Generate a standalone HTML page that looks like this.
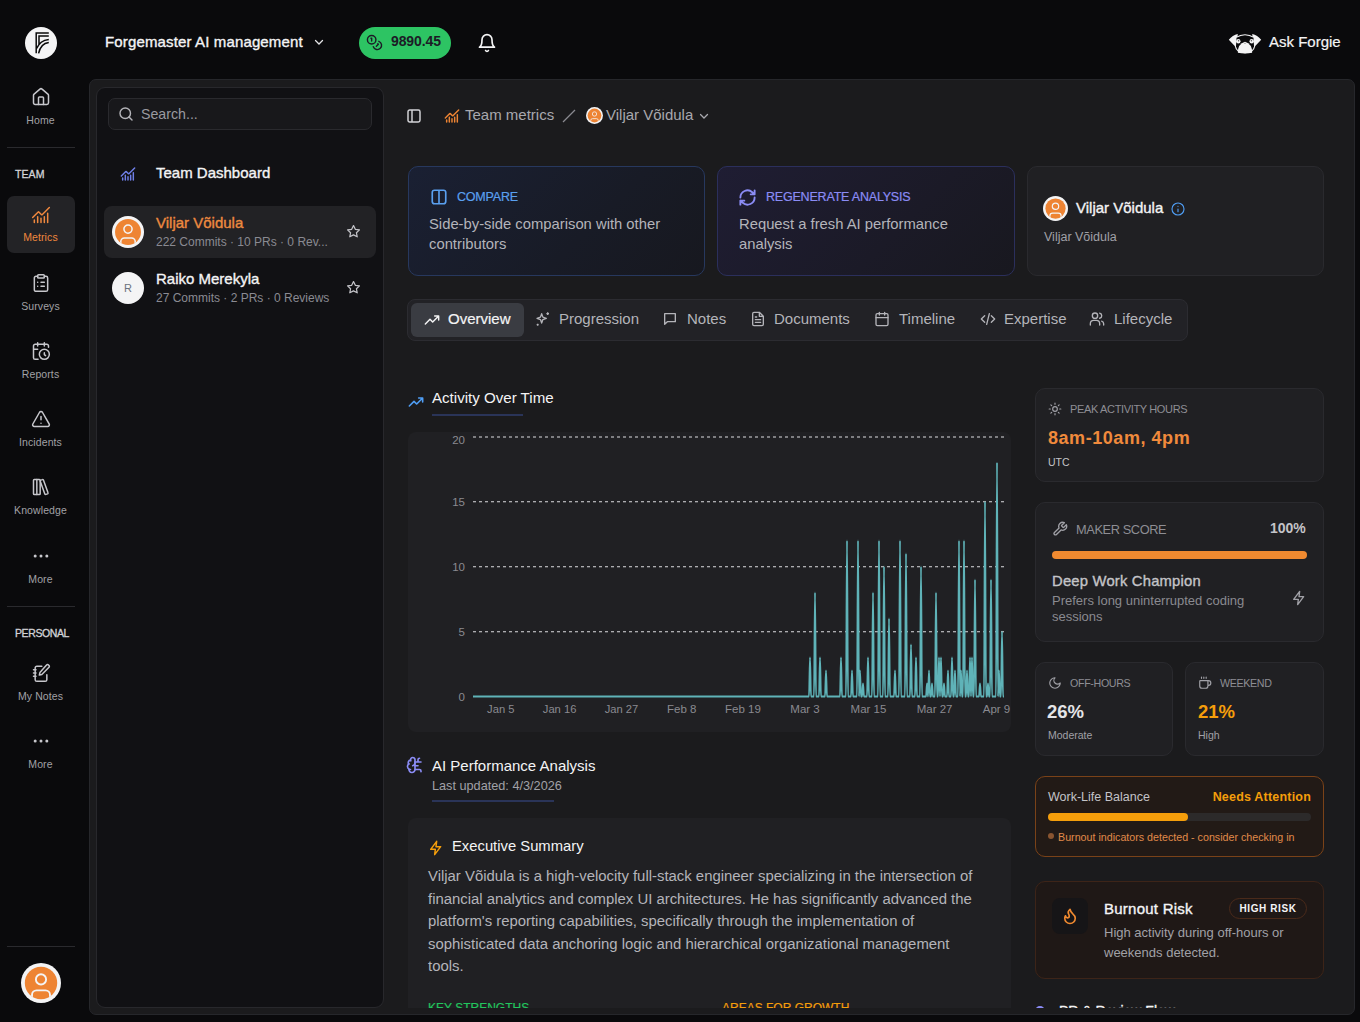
<!DOCTYPE html>
<html><head><meta charset="utf-8">
<style>
*{box-sizing:border-box;margin:0;padding:0}
html,body{width:1360px;height:1022px;overflow:hidden;background:#0a0a0c;font-family:"Liberation Sans",sans-serif;color:#e5e5e7}
.a{position:absolute}
svg{display:block}
.nl{position:absolute;left:0;width:81px;text-align:center;font-size:10.5px;color:#a1a1a6;letter-spacing:0.1px}
.ni{position:absolute;left:31px;width:20px;height:20px;stroke-width:1.8}
.sec{position:absolute;left:15px;font-size:10.5px;color:#d4d4d8;-webkit-text-stroke:0.3px #d4d4d8;letter-spacing:0.6px}
.div{position:absolute;left:7px;width:68px;height:1px;background:#2a2a2e}
#main{position:absolute;left:89px;top:79px;width:1266px;height:936px;background:#1b1b1d;border:1px solid #26272b;border-radius:7px;overflow:hidden}
#side{position:absolute;left:96px;top:87px;width:288px;height:921px;background:#111114;border:1px solid #28282c;border-radius:9px}
.card{position:absolute;border-radius:10px}
.sb{-webkit-text-stroke:0.35px currentColor}
.tab{position:absolute;top:303px;height:33px;font-size:14.5px;color:#b4b4b9;display:flex;align-items:center}
</style></head><body>

<!-- left nav -->
<svg class="a" style="left:25px;top:27px" width="32" height="32" viewBox="25 27 32 32"><circle cx="41" cy="43" r="16" fill="#f4f4f5"/>
<path d="M48.8 33.1H36.2V53.3M48.8 36H39V44.5M36.6 48.5C39 42.5 43 40 48.8 39.4M38.6 53.3C40 46.5 43.5 43 48.8 42.4" stroke="#0a0a0a" stroke-width="1.5" fill="none"/></svg>

<svg class="ni" style="top:87px" viewBox="0 0 24 24" fill="none" stroke="#c7c7cc" stroke-width="2" stroke-linecap="round" stroke-linejoin="round"><path d="M15 21v-8a1 1 0 0 0-1-1h-4a1 1 0 0 0-1 1v8"/><path d="M3 10a2 2 0 0 1 .709-1.528l7-5.999a2 2 0 0 1 2.582 0l7 5.999A2 2 0 0 1 21 10v9a2 2 0 0 1-2 2H5a2 2 0 0 1-2-2z"/></svg>
<div class="nl" style="top:114px">Home</div>
<div class="div" style="top:147px"></div>
<div class="sec" style="top:168px;letter-spacing:0.1px">TEAM</div>

<div class="a" style="left:7px;top:196px;width:68px;height:57px;background:#232326;border-radius:7px"></div>
<svg class="ni" style="top:205px" viewBox="0 0 24 24" fill="none" stroke="#f0883e" stroke-width="2" stroke-linecap="round" stroke-linejoin="round"><path d="M12 16v5M16 14v7M20 10v11M22 3l-8.646 8.646a.5.5 0 0 1-.708 0L9.354 8.354a.5.5 0 0 0-.707 0L2 15M4 18v3M8 14v7"/></svg>
<div class="nl" style="top:231px;color:#f0883e">Metrics</div>

<svg class="ni" style="top:273px" viewBox="0 0 24 24" fill="none" stroke="#c7c7cc" stroke-width="2" stroke-linecap="round" stroke-linejoin="round"><rect x="8" y="2" width="8" height="4" rx="1"/><path d="M16 4h2a2 2 0 0 1 2 2v14a2 2 0 0 1-2 2H6a2 2 0 0 1-2-2V6a2 2 0 0 1 2-2h2M12 11h4M12 16h4M8 11h.01M8 16h.01"/></svg>
<div class="nl" style="top:300px">Surveys</div>

<svg class="ni" style="top:341px" viewBox="0 0 24 24" fill="none" stroke="#c7c7cc" stroke-width="2" stroke-linecap="round" stroke-linejoin="round"><path d="M21 7.5V6a2 2 0 0 0-2-2H5a2 2 0 0 0-2 2v14a2 2 0 0 0 2 2h3.5M16 2v4M8 2v4M3 10h5M17.5 17.5 16 16.3V14"/><circle cx="16" cy="16" r="6"/></svg>
<div class="nl" style="top:368px">Reports</div>

<svg class="ni" style="top:409px" viewBox="0 0 24 24" fill="none" stroke="#c7c7cc" stroke-width="2" stroke-linecap="round" stroke-linejoin="round"><path d="M10.3 3.9 2.2 18a2 2 0 0 0 1.7 3h16.2a2 2 0 0 0 1.7-3L13.7 3.9a2 2 0 0 0-3.4 0zM12 9v4M12 17h.01"/></svg>
<div class="nl" style="top:436px">Incidents</div>

<svg class="ni" style="top:477px" viewBox="0 0 24 24" fill="none" stroke="#c7c7cc" stroke-width="2" stroke-linecap="round" stroke-linejoin="round"><rect width="8" height="18" x="3" y="3" rx="1"/><path d="M7 3v18M20.4 18.9c.2.5-.1 1.1-.6 1.3l-1.9.7c-.5.2-1.1-.1-1.3-.6L11.1 5.1c-.2-.5.1-1.1.6-1.3l1.9-.7c.5-.2 1.1.1 1.3.6Z"/></svg>
<div class="nl" style="top:504px">Knowledge</div>

<svg class="ni" style="top:546px" viewBox="0 0 24 24" fill="#c7c7cc"><circle cx="5" cy="12" r="1.8"/><circle cx="12" cy="12" r="1.8"/><circle cx="19" cy="12" r="1.8"/></svg>
<div class="nl" style="top:573px">More</div>
<div class="div" style="top:606px"></div>
<div class="sec" style="top:627px;letter-spacing:-0.4px">PERSONAL</div>

<svg class="ni" style="top:663px" viewBox="0 0 24 24" fill="none" stroke="#c7c7cc" stroke-width="2" stroke-linecap="round" stroke-linejoin="round"><path d="M13 4H7a2 2 0 0 0-2 2v14a2 2 0 0 0 2 2h10a2 2 0 0 0 2-2v-6M3 8h3M3 12h3M3 16h3M18.4 2.6a2 2 0 0 1 2.9 2.9L13 13.8 10 14.5l.7-3z"/></svg>
<div class="nl" style="top:690px">My Notes</div>

<svg class="ni" style="top:731px" viewBox="0 0 24 24" fill="#c7c7cc"><circle cx="5" cy="12" r="1.8"/><circle cx="12" cy="12" r="1.8"/><circle cx="19" cy="12" r="1.8"/></svg>
<div class="nl" style="top:758px">More</div>
<div class="div" style="top:946px"></div>

<svg class="a" style="left:21px;top:963px" width="40" height="40" viewBox="0 0 40 40"><defs><clipPath id="c21"><circle cx="20" cy="20" r="16.2"/></clipPath></defs><circle cx="20" cy="20" r="20" fill="#f4f4f5"/><circle cx="20" cy="20" r="16.2" fill="#ee8433"/><circle cx="20" cy="16.4" r="5.1" fill="none" stroke="#f4f4f5" stroke-width="1.9"/><rect x="11" y="27.4" width="18" height="14" rx="4.5" fill="none" stroke="#f4f4f5" stroke-width="1.9" clip-path="url(#c21)"/></svg>

<!-- top bar -->
<div class="a sb" style="left:105px;top:33px;font-size:15px;color:#f4f4f5;letter-spacing:0.14px">Forgemaster AI management</div>
<svg class="a" style="left:313px;top:36px" width="12" height="12" viewBox="0 0 24 24" fill="none" stroke="#e4e4e7" stroke-width="2.5" stroke-linecap="round"><path d="M5 9l7 7 7-7"/></svg>

<div class="a" style="left:359px;top:27px;width:92px;height:32px;border-radius:16px;background:#2dc463"></div>
<svg class="a" style="left:366px;top:34px" width="17" height="17" viewBox="0 0 24 24" fill="none" stroke="#1c1b26" stroke-width="2" stroke-linecap="round" stroke-linejoin="round"><circle cx="8" cy="8" r="6"/><path d="M18.09 10.37A6 6 0 1 1 10.34 18M7 6h1v4M16.71 13.88l.7.71-2.82 2.82"/></svg>
<div class="a" style="left:391px;top:33px;font-size:14px;font-weight:bold;color:#1c1b26;letter-spacing:-0.1px">9890.45</div>

<svg class="a" style="left:477px;top:32px" width="20" height="22" viewBox="0 0 24 24" fill="none" stroke="#f4f4f5" stroke-width="2" stroke-linecap="round" stroke-linejoin="round"><path d="M6 8a6 6 0 0 1 12 0c0 7 3 9 3 9H3s3-2 3-9M10.3 21a1.9 1.9 0 0 0 3.4 0"/></svg>

<svg class="a" style="left:1228px;top:32px" width="34" height="22" viewBox="1228 32 34 22">
<path d="M1228.8 39.8Q1232.5 34.8 1237.8 33.9L1236.2 47.6Z M1261.2 39.8Q1257.5 34.8 1252.2 33.9L1253.8 47.6Z" fill="#f4f4f5"/>
<path d="M1235.4 37.2Q1245 31.4 1254.6 37.2L1255.1 46.5Q1254 53.3 1245 53.3Q1236 53.3 1234.9 46.5Z" fill="#f4f4f5"/>
<path d="M1236.5 37.8Q1245 32.7 1253.5 37.8L1254 46.3Q1253 52.2 1245 52.2Q1237 52.2 1236 46.3Z" fill="#0a0a0c"/>
<path d="M1237.9 52.8Q1237.6 44 1245 41.8Q1252.4 44 1252.1 52.8Q1245 54 1237.9 52.8Z" fill="#f4f4f5"/>
<circle cx="1238.3" cy="41.2" r="2.2" fill="#f4f4f5"/><circle cx="1251.7" cy="41.2" r="2.2" fill="#f4f4f5"/>
<circle cx="1238.6" cy="40.8" r="0.7" fill="#555"/><circle cx="1251.4" cy="40.8" r="0.7" fill="#555"/>
<circle cx="1245" cy="43.3" r="0.6" fill="#777"/>
</svg>
<div class="a" style="left:1269px;top:33px;font-size:15px;color:#f4f4f5;-webkit-text-stroke:0.2px #f4f4f5">Ask Forgie</div>

<!-- main panel -->
<div id="main"></div>
<div id="side"></div>
<!-- side panel content -->
<div class="a" style="left:108px;top:98px;width:264px;height:32px;border-radius:7px;background:#18181b;border:1px solid #2a2a2e"></div>
<svg class="a" style="left:117px;top:104.5px" width="18" height="18" viewBox="0 0 24 24" fill="none" stroke="#b4b4b9" stroke-width="1.9" stroke-linecap="round"><circle cx="11" cy="11" r="7"/><path d="M20 20l-4-4"/></svg>
<div class="a" style="left:141px;top:106px;font-size:14.2px;color:#9a9aa0">Search...</div>

<svg class="a" style="left:120px;top:166px" width="16" height="16" viewBox="0 0 24 24" fill="none" stroke="#6f7fe8" stroke-width="2.2" stroke-linecap="round" stroke-linejoin="round"><path d="M12 16v5M16 14v7M20 10v11M22 3l-8.646 8.646a.5.5 0 0 1-.708 0L9.354 8.354a.5.5 0 0 0-.707 0L2 15M4 18v3M8 14v7"/></svg>
<div class="a sb" style="left:156px;top:164px;font-size:15px;color:#f4f4f5">Team Dashboard</div>

<div class="a" style="left:104px;top:206px;width:272px;height:52px;border-radius:8px;background:#222225"></div>
<svg class="a" style="left:112px;top:216px" width="32" height="32" viewBox="0 0 40 40"><defs><clipPath id="c112"><circle cx="20" cy="20" r="16.2"/></clipPath></defs><circle cx="20" cy="20" r="20" fill="#f4f4f5"/><circle cx="20" cy="20" r="16.2" fill="#ee8433"/><circle cx="20" cy="16.4" r="5.1" fill="none" stroke="#f4f4f5" stroke-width="1.9"/><rect x="11" y="27.4" width="18" height="14" rx="4.5" fill="none" stroke="#f4f4f5" stroke-width="1.9" clip-path="url(#c112)"/></svg>
<div class="a sb" style="left:156px;top:214px;font-size:15px;color:#ee8a40">Viljar Võidula</div>
<div class="a" style="left:156px;top:235px;font-size:12px;color:#8a8a92">222 Commits · 10 PRs · 0 Rev...</div>
<svg class="a" style="left:346px;top:224px" width="15" height="15" viewBox="0 0 24 24" fill="none" stroke="#c4c4c9" stroke-width="2" stroke-linejoin="round"><path d="M12 2.5l2.9 6 6.6.9-4.8 4.6 1.2 6.5L12 17.4l-5.9 3.1 1.2-6.5L2.5 9.4l6.6-.9z"/></svg>

<div class="a" style="left:112px;top:272px;width:32px;height:32px;border-radius:50%;background:#f4f4f5;font-size:11px;color:#6b7280;text-align:center;line-height:32px">R</div>
<div class="a sb" style="left:156px;top:270px;font-size:15px;color:#f4f4f5">Raiko Merekyla</div>
<div class="a" style="left:156px;top:291px;font-size:12px;color:#8a8a92">27 Commits · 2 PRs · 0 Reviews</div>
<svg class="a" style="left:346px;top:280px" width="15" height="15" viewBox="0 0 24 24" fill="none" stroke="#c4c4c9" stroke-width="2" stroke-linejoin="round"><path d="M12 2.5l2.9 6 6.6.9-4.8 4.6 1.2 6.5L12 17.4l-5.9 3.1 1.2-6.5L2.5 9.4l6.6-.9z"/></svg>


<!-- breadcrumb -->
<svg class="a" style="left:406px;top:108px" width="16" height="16" viewBox="0 0 24 24" fill="none" stroke="#d4d4d8" stroke-width="2.2" stroke-linejoin="round"><rect x="3" y="3" width="18" height="18" rx="2.5"/><path d="M9 3v18"/></svg>
<svg class="a" style="left:444px;top:108px" width="16" height="16" viewBox="0 0 24 24" fill="none" stroke="#ee8433" stroke-width="2.2" stroke-linecap="round" stroke-linejoin="round"><path d="M12 16v5M16 14v7M20 10v11M22 3l-8.646 8.646a.5.5 0 0 1-.708 0L9.354 8.354a.5.5 0 0 0-.707 0L2 15M4 18v3M8 14v7"/></svg>
<div class="a" style="left:465px;top:106px;font-size:15px;color:#a8a8ae">Team metrics</div>
<svg class="a" style="left:561px;top:108px" width="16" height="16" viewBox="0 0 16 16"><path d="M2 14L14 2" stroke="#8a8a90" stroke-width="1.3"/></svg>
<svg class="a" style="left:586px;top:107px" width="17" height="17" viewBox="0 0 40 40"><defs><clipPath id="c586"><circle cx="20" cy="20" r="16.2"/></clipPath></defs><circle cx="20" cy="20" r="20" fill="#f4f4f5"/><circle cx="20" cy="20" r="16.2" fill="#ee8433"/><circle cx="20" cy="16.4" r="5.1" fill="none" stroke="#f4f4f5" stroke-width="1.9"/><rect x="11" y="27.4" width="18" height="14" rx="4.5" fill="none" stroke="#f4f4f5" stroke-width="1.9" clip-path="url(#c586)"/></svg>
<div class="a" style="left:606px;top:106px;font-size:15px;color:#a8a8ae">Viljar Võidula</div>
<svg class="a" style="left:698px;top:110px" width="12" height="12" viewBox="0 0 24 24" fill="none" stroke="#a8a8ae" stroke-width="2.5" stroke-linecap="round"><path d="M5 9l7 7 7-7"/></svg>

<!-- action cards -->
<div class="card" style="left:408px;top:166px;width:297px;height:110px;background:linear-gradient(135deg,#1a2033 0%,#181b26 60%,#17181f 100%);border:1px solid #27385e"></div>
<svg class="a" style="left:430px;top:188px" width="18" height="18" viewBox="0 0 24 24" fill="none" stroke="#5aa0f0" stroke-width="2.2"><rect x="3" y="3" width="18" height="18" rx="3"/><path d="M12 3v18"/></svg>
<div class="a" style="left:457px;top:190px;font-size:12.5px;color:#5aa0f0;letter-spacing:-0.2px;-webkit-text-stroke:0.2px #5aa0f0">COMPARE</div>
<div class="a" style="left:429px;top:215px;width:270px;font-size:14.8px;line-height:19.5px;color:#b4b4ba">Side-by-side comparison with other contributors</div>

<div class="card" style="left:717px;top:166px;width:298px;height:110px;background:linear-gradient(135deg,#1f1d33 0%,#1b1a27 60%,#18181f 100%);border:1px solid #2b2f5c"></div>
<svg class="a" style="left:738px;top:188px" width="19" height="19" viewBox="0 0 24 24" fill="none" stroke="#8b8cf5" stroke-width="2.4" stroke-linecap="round" stroke-linejoin="round"><path d="M3 12a9 9 0 0 1 15-6.7L21 8M21 3v5h-5M21 12a9 9 0 0 1-15 6.7L3 16M3 21v-5h5"/></svg>
<div class="a" style="left:766px;top:190px;font-size:12.5px;color:#8b8cf5;letter-spacing:-0.2px;-webkit-text-stroke:0.2px #8b8cf5">REGENERATE ANALYSIS</div>
<div class="a" style="left:739px;top:215px;width:270px;font-size:14.8px;line-height:19.5px;color:#b4b4ba">Request a fresh AI performance<br>analysis</div>

<div class="card" style="left:1027px;top:166px;width:297px;height:110px;background:#202023;border:1px solid #2a2a2e"></div>
<svg class="a" style="left:1043px;top:196px" width="25" height="25" viewBox="0 0 40 40"><defs><clipPath id="c1043"><circle cx="20" cy="20" r="16.2"/></clipPath></defs><circle cx="20" cy="20" r="20" fill="#f4f4f5"/><circle cx="20" cy="20" r="16.2" fill="#ee8433"/><circle cx="20" cy="16.4" r="5.1" fill="none" stroke="#f4f4f5" stroke-width="1.9"/><rect x="11" y="27.4" width="18" height="14" rx="4.5" fill="none" stroke="#f4f4f5" stroke-width="1.9" clip-path="url(#c1043)"/></svg>
<div class="a sb" style="left:1076px;top:199px;font-size:15px;color:#f4f4f5">Viljar Võidula</div>
<svg class="a" style="left:1170px;top:201px" width="16" height="16" viewBox="0 0 24 24" fill="none" stroke="#4f9ef5" stroke-width="1.7" stroke-linecap="round"><circle cx="12" cy="12" r="9"/><path d="M12 16v-4M12 8h.01"/></svg>
<div class="a" style="left:1044px;top:230px;font-size:12.5px;color:#a1a1a7">Viljar Võidula</div>

<!-- tabs -->
<div class="a" style="left:407px;top:299px;width:781px;height:42px;border-radius:8px;background:#222226;border:1px solid #2c2c31"></div>
<div class="a" style="left:411px;top:303px;width:113px;height:34px;border-radius:6px;background:#3a3c42"></div>
<svg class="a" style="left:424px;top:312px" width="16" height="16" viewBox="0 0 24 24" fill="none" stroke="#f4f4f5" stroke-width="2.2" stroke-linecap="round" stroke-linejoin="round"><path d="M2 18l7-7 4 4 9-9M16 6h6v6"/></svg>
<div class="a" style="left:448px;top:310px;font-size:15px;color:#f4f4f5;-webkit-text-stroke:0.2px #f4f4f5">Overview</div>
<svg class="a" style="left:535px;top:311px" width="16" height="16" viewBox="0 0 24 24" fill="none" stroke="#b4b4b9" stroke-width="2" stroke-linejoin="round"><path d="M10 4l1.8 5.2L17 11l-5.2 1.8L10 18l-1.8-5.2L3 11l5.2-1.8zM19 2v4M21 4h-4M4 19v3M5.5 20.5h-3"/></svg>
<div class="a" style="left:559px;top:310px;font-size:15px;color:#b4b4b9">Progression</div>
<svg class="a" style="left:662px;top:311px" width="16" height="16" viewBox="0 0 24 24" fill="none" stroke="#b4b4b9" stroke-width="2" stroke-linejoin="round"><path d="M4 4h16v12H8l-4 4z"/></svg>
<div class="a" style="left:687px;top:310px;font-size:15px;color:#b4b4b9">Notes</div>
<svg class="a" style="left:750px;top:311px" width="16" height="16" viewBox="0 0 24 24" fill="none" stroke="#b4b4b9" stroke-width="2" stroke-linejoin="round" stroke-linecap="round"><path d="M14 2H6a2 2 0 0 0-2 2v16a2 2 0 0 0 2 2h12a2 2 0 0 0 2-2V8zM14 2v6h6M8 13h8M8 17h8M8 9h2"/></svg>
<div class="a" style="left:774px;top:310px;font-size:15px;color:#b4b4b9">Documents</div>
<svg class="a" style="left:874px;top:311px" width="16" height="16" viewBox="0 0 24 24" fill="none" stroke="#b4b4b9" stroke-width="2" stroke-linejoin="round" stroke-linecap="round"><rect x="3" y="4" width="18" height="18" rx="2"/><path d="M3 10h18M8 2v4M16 2v4"/></svg>
<div class="a" style="left:899px;top:310px;font-size:15px;color:#b4b4b9">Timeline</div>
<svg class="a" style="left:980px;top:311px" width="16" height="16" viewBox="0 0 24 24" fill="none" stroke="#b4b4b9" stroke-width="2" stroke-linejoin="round" stroke-linecap="round"><path d="M7 7l-5 5 5 5M17 7l5 5-5 5M14 4l-4 16"/></svg>
<div class="a" style="left:1004px;top:310px;font-size:15px;color:#b4b4b9">Expertise</div>
<svg class="a" style="left:1089px;top:311px" width="16" height="16" viewBox="0 0 24 24" fill="none" stroke="#b4b4b9" stroke-width="2" stroke-linejoin="round" stroke-linecap="round"><circle cx="9" cy="7" r="4"/><path d="M2 21v-2a5 5 0 0 1 5-5h4a5 5 0 0 1 5 5v2M16 3.1a4 4 0 0 1 0 7.8M22 21v-2a4 4 0 0 0-3-3.9"/></svg>
<div class="a" style="left:1114px;top:310px;font-size:15px;color:#b4b4b9">Lifecycle</div>

<!-- activity -->
<svg class="a" style="left:408px;top:396px" width="16" height="12" viewBox="0 0 24 18" fill="none" stroke="#4f9ef5" stroke-width="2.4" stroke-linecap="round" stroke-linejoin="round"><path d="M2 15l7-7 4 4 9-9M16 3h6v6"/></svg>
<div class="a" style="left:432px;top:388.5px;font-size:15.1px;color:#f4f4f5">Activity Over Time</div>
<div class="a" style="left:432px;top:414px;width:91px;height:2px;background:#2a3458"></div>
<div class="a" style="left:408px;top:432px;width:603px;height:300px;border-radius:8px;background:#202023"></div>
<svg class="a" style="left:0;top:0;font-family:'Liberation Sans',sans-serif" width="1360" height="1022">
<path d="M473 437H1004" stroke="#dcdce0" stroke-width="1.1" stroke-dasharray="3 3"/><text x="465" y="444" text-anchor="end" font-size="11.5" fill="#8a8a90">20</text><path d="M473 501.8H1004" stroke="#dcdce0" stroke-width="1.1" stroke-dasharray="3 3"/><text x="465" y="505.8" text-anchor="end" font-size="11.5" fill="#8a8a90">15</text><path d="M473 566.8H1004" stroke="#dcdce0" stroke-width="1.1" stroke-dasharray="3 3"/><text x="465" y="570.8" text-anchor="end" font-size="11.5" fill="#8a8a90">10</text><path d="M473 631.8H1004" stroke="#dcdce0" stroke-width="1.1" stroke-dasharray="3 3"/><text x="465" y="635.8" text-anchor="end" font-size="11.5" fill="#8a8a90">5</text><text x="465" y="700.5" text-anchor="end" font-size="11.5" fill="#8a8a90">0</text><text x="500.8" y="713" text-anchor="middle" font-size="11.2" fill="#8a8a90">Jan 5</text><text x="559.6" y="713" text-anchor="middle" font-size="11.2" fill="#8a8a90">Jan 16</text><text x="621.5" y="713" text-anchor="middle" font-size="11.2" fill="#8a8a90">Jan 27</text><text x="681.7" y="713" text-anchor="middle" font-size="11.5" fill="#8a8a90">Feb 8</text><text x="743" y="713" text-anchor="middle" font-size="11.5" fill="#8a8a90">Feb 19</text><text x="805" y="713" text-anchor="middle" font-size="11.5" fill="#8a8a90">Mar 3</text><text x="868.5" y="713" text-anchor="middle" font-size="11.5" fill="#8a8a90">Mar 15</text><text x="934.6" y="713" text-anchor="middle" font-size="11.5" fill="#8a8a90">Mar 27</text><text x="996.5" y="713" text-anchor="middle" font-size="11.5" fill="#8a8a90">Apr 9</text>
<path d="M473.00 696.50C473.33 696.50 473.67 696.50 474.00 696.50C474.33 696.50 474.67 696.50 475.00 696.50C475.33 696.50 475.67 696.50 476.00 696.50C476.33 696.50 476.67 696.50 477.00 696.50C477.33 696.50 477.67 696.50 478.00 696.50C478.33 696.50 478.67 696.50 479.00 696.50C479.33 696.50 479.67 696.50 480.00 696.50C480.33 696.50 480.67 696.50 481.00 696.50C481.33 696.50 481.67 696.50 482.00 696.50C482.33 696.50 482.67 696.50 483.00 696.50C483.33 696.50 483.67 696.50 484.00 696.50C484.33 696.50 484.67 696.50 485.00 696.50C485.33 696.50 485.67 696.50 486.00 696.50C486.33 696.50 486.67 696.50 487.00 696.50C487.33 696.50 487.67 696.50 488.00 696.50C488.33 696.50 488.67 696.50 489.00 696.50C489.33 696.50 489.67 696.50 490.00 696.50C490.33 696.50 490.67 696.50 491.00 696.50C491.33 696.50 491.67 696.50 492.00 696.50C492.33 696.50 492.67 696.50 493.00 696.50C493.33 696.50 493.67 696.50 494.00 696.50C494.33 696.50 494.67 696.50 495.00 696.50C495.33 696.50 495.67 696.50 496.00 696.50C496.33 696.50 496.67 696.50 497.00 696.50C497.33 696.50 497.67 696.50 498.00 696.50C498.33 696.50 498.67 696.50 499.00 696.50C499.33 696.50 499.67 696.50 500.00 696.50C500.33 696.50 500.67 696.50 501.00 696.50C501.33 696.50 501.67 696.50 502.00 696.50C502.33 696.50 502.67 696.50 503.00 696.50C503.33 696.50 503.67 696.50 504.00 696.50C504.33 696.50 504.67 696.50 505.00 696.50C505.33 696.50 505.67 696.50 506.00 696.50C506.33 696.50 506.67 696.50 507.00 696.50C507.33 696.50 507.67 696.50 508.00 696.50C508.33 696.50 508.67 696.50 509.00 696.50C509.33 696.50 509.67 696.50 510.00 696.50C510.33 696.50 510.67 696.50 511.00 696.50C511.33 696.50 511.67 696.50 512.00 696.50C512.33 696.50 512.67 696.50 513.00 696.50C513.33 696.50 513.67 696.50 514.00 696.50C514.33 696.50 514.67 696.50 515.00 696.50C515.33 696.50 515.67 696.50 516.00 696.50C516.33 696.50 516.67 696.50 517.00 696.50C517.33 696.50 517.67 696.50 518.00 696.50C518.33 696.50 518.67 696.50 519.00 696.50C519.33 696.50 519.67 696.50 520.00 696.50C520.33 696.50 520.67 696.50 521.00 696.50C521.33 696.50 521.67 696.50 522.00 696.50C522.33 696.50 522.67 696.50 523.00 696.50C523.33 696.50 523.67 696.50 524.00 696.50C524.33 696.50 524.67 696.50 525.00 696.50C525.33 696.50 525.67 696.50 526.00 696.50C526.33 696.50 526.67 696.50 527.00 696.50C527.33 696.50 527.67 696.50 528.00 696.50C528.33 696.50 528.67 696.50 529.00 696.50C529.33 696.50 529.67 696.50 530.00 696.50C530.33 696.50 530.67 696.50 531.00 696.50C531.33 696.50 531.67 696.50 532.00 696.50C532.33 696.50 532.67 696.50 533.00 696.50C533.33 696.50 533.67 696.50 534.00 696.50C534.33 696.50 534.67 696.50 535.00 696.50C535.33 696.50 535.67 696.50 536.00 696.50C536.33 696.50 536.67 696.50 537.00 696.50C537.33 696.50 537.67 696.50 538.00 696.50C538.33 696.50 538.67 696.50 539.00 696.50C539.33 696.50 539.67 696.50 540.00 696.50C540.33 696.50 540.67 696.50 541.00 696.50C541.33 696.50 541.67 696.50 542.00 696.50C542.33 696.50 542.67 696.50 543.00 696.50C543.33 696.50 543.67 696.50 544.00 696.50C544.33 696.50 544.67 696.50 545.00 696.50C545.33 696.50 545.67 696.50 546.00 696.50C546.33 696.50 546.67 696.50 547.00 696.50C547.33 696.50 547.67 696.50 548.00 696.50C548.33 696.50 548.67 696.50 549.00 696.50C549.33 696.50 549.67 696.50 550.00 696.50C550.33 696.50 550.67 696.50 551.00 696.50C551.33 696.50 551.67 696.50 552.00 696.50C552.33 696.50 552.67 696.50 553.00 696.50C553.33 696.50 553.67 696.50 554.00 696.50C554.33 696.50 554.67 696.50 555.00 696.50C555.33 696.50 555.67 696.50 556.00 696.50C556.33 696.50 556.67 696.50 557.00 696.50C557.33 696.50 557.67 696.50 558.00 696.50C558.33 696.50 558.67 696.50 559.00 696.50C559.33 696.50 559.67 696.50 560.00 696.50C560.33 696.50 560.67 696.50 561.00 696.50C561.33 696.50 561.67 696.50 562.00 696.50C562.33 696.50 562.67 696.50 563.00 696.50C563.33 696.50 563.67 696.50 564.00 696.50C564.33 696.50 564.67 696.50 565.00 696.50C565.33 696.50 565.67 696.50 566.00 696.50C566.33 696.50 566.67 696.50 567.00 696.50C567.33 696.50 567.67 696.50 568.00 696.50C568.33 696.50 568.67 696.50 569.00 696.50C569.33 696.50 569.67 696.50 570.00 696.50C570.33 696.50 570.67 696.50 571.00 696.50C571.33 696.50 571.67 696.50 572.00 696.50C572.33 696.50 572.67 696.50 573.00 696.50C573.33 696.50 573.67 696.50 574.00 696.50C574.33 696.50 574.67 696.50 575.00 696.50C575.33 696.50 575.67 696.50 576.00 696.50C576.33 696.50 576.67 696.50 577.00 696.50C577.33 696.50 577.67 696.50 578.00 696.50C578.33 696.50 578.67 696.50 579.00 696.50C579.33 696.50 579.67 696.50 580.00 696.50C580.33 696.50 580.67 696.50 581.00 696.50C581.33 696.50 581.67 696.50 582.00 696.50C582.33 696.50 582.67 696.50 583.00 696.50C583.33 696.50 583.67 696.50 584.00 696.50C584.33 696.50 584.67 696.50 585.00 696.50C585.33 696.50 585.67 696.50 586.00 696.50C586.33 696.50 586.67 696.50 587.00 696.50C587.33 696.50 587.67 696.50 588.00 696.50C588.33 696.50 588.67 696.50 589.00 696.50C589.33 696.50 589.67 696.50 590.00 696.50C590.33 696.50 590.67 696.50 591.00 696.50C591.33 696.50 591.67 696.50 592.00 696.50C592.33 696.50 592.67 696.50 593.00 696.50C593.33 696.50 593.67 696.50 594.00 696.50C594.33 696.50 594.67 696.50 595.00 696.50C595.33 696.50 595.67 696.50 596.00 696.50C596.33 696.50 596.67 696.50 597.00 696.50C597.33 696.50 597.67 696.50 598.00 696.50C598.33 696.50 598.67 696.50 599.00 696.50C599.33 696.50 599.67 696.50 600.00 696.50C600.33 696.50 600.67 696.50 601.00 696.50C601.33 696.50 601.67 696.50 602.00 696.50C602.33 696.50 602.67 696.50 603.00 696.50C603.33 696.50 603.67 696.50 604.00 696.50C604.33 696.50 604.67 696.50 605.00 696.50C605.33 696.50 605.67 696.50 606.00 696.50C606.33 696.50 606.67 696.50 607.00 696.50C607.33 696.50 607.67 696.50 608.00 696.50C608.33 696.50 608.67 696.50 609.00 696.50C609.33 696.50 609.67 696.50 610.00 696.50C610.33 696.50 610.67 696.50 611.00 696.50C611.33 696.50 611.67 696.50 612.00 696.50C612.33 696.50 612.67 696.50 613.00 696.50C613.33 696.50 613.67 696.50 614.00 696.50C614.33 696.50 614.67 696.50 615.00 696.50C615.33 696.50 615.67 696.50 616.00 696.50C616.33 696.50 616.67 696.50 617.00 696.50C617.33 696.50 617.67 696.50 618.00 696.50C618.33 696.50 618.67 696.50 619.00 696.50C619.33 696.50 619.67 696.50 620.00 696.50C620.33 696.50 620.67 696.50 621.00 696.50C621.33 696.50 621.67 696.50 622.00 696.50C622.33 696.50 622.67 696.50 623.00 696.50C623.33 696.50 623.67 696.50 624.00 696.50C624.33 696.50 624.67 696.50 625.00 696.50C625.33 696.50 625.67 696.50 626.00 696.50C626.33 696.50 626.67 696.50 627.00 696.50C627.33 696.50 627.67 696.50 628.00 696.50C628.33 696.50 628.67 696.50 629.00 696.50C629.33 696.50 629.67 696.50 630.00 696.50C630.33 696.50 630.67 696.50 631.00 696.50C631.33 696.50 631.67 696.50 632.00 696.50C632.33 696.50 632.67 696.50 633.00 696.50C633.33 696.50 633.67 696.50 634.00 696.50C634.33 696.50 634.67 696.50 635.00 696.50C635.33 696.50 635.67 696.50 636.00 696.50C636.33 696.50 636.67 696.50 637.00 696.50C637.33 696.50 637.67 696.50 638.00 696.50C638.33 696.50 638.67 696.50 639.00 696.50C639.33 696.50 639.67 696.50 640.00 696.50C640.33 696.50 640.67 696.50 641.00 696.50C641.33 696.50 641.67 696.50 642.00 696.50C642.33 696.50 642.67 696.50 643.00 696.50C643.33 696.50 643.67 696.50 644.00 696.50C644.33 696.50 644.67 696.50 645.00 696.50C645.33 696.50 645.67 696.50 646.00 696.50C646.33 696.50 646.67 696.50 647.00 696.50C647.33 696.50 647.67 696.50 648.00 696.50C648.33 696.50 648.67 696.50 649.00 696.50C649.33 696.50 649.67 696.50 650.00 696.50C650.33 696.50 650.67 696.50 651.00 696.50C651.33 696.50 651.67 696.50 652.00 696.50C652.33 696.50 652.67 696.50 653.00 696.50C653.33 696.50 653.67 696.50 654.00 696.50C654.33 696.50 654.67 696.50 655.00 696.50C655.33 696.50 655.67 696.50 656.00 696.50C656.33 696.50 656.67 696.50 657.00 696.50C657.33 696.50 657.67 696.50 658.00 696.50C658.33 696.50 658.67 696.50 659.00 696.50C659.33 696.50 659.67 696.50 660.00 696.50C660.33 696.50 660.67 696.50 661.00 696.50C661.33 696.50 661.67 696.50 662.00 696.50C662.33 696.50 662.67 696.50 663.00 696.50C663.33 696.50 663.67 696.50 664.00 696.50C664.33 696.50 664.67 696.50 665.00 696.50C665.33 696.50 665.67 696.50 666.00 696.50C666.33 696.50 666.67 696.50 667.00 696.50C667.33 696.50 667.67 696.50 668.00 696.50C668.33 696.50 668.67 696.50 669.00 696.50C669.33 696.50 669.67 696.50 670.00 696.50C670.33 696.50 670.67 696.50 671.00 696.50C671.33 696.50 671.67 696.50 672.00 696.50C672.33 696.50 672.67 696.50 673.00 696.50C673.33 696.50 673.67 696.50 674.00 696.50C674.33 696.50 674.67 696.50 675.00 696.50C675.33 696.50 675.67 696.50 676.00 696.50C676.33 696.50 676.67 696.50 677.00 696.50C677.33 696.50 677.67 696.50 678.00 696.50C678.33 696.50 678.67 696.50 679.00 696.50C679.33 696.50 679.67 696.50 680.00 696.50C680.33 696.50 680.67 696.50 681.00 696.50C681.33 696.50 681.67 696.50 682.00 696.50C682.33 696.50 682.67 696.50 683.00 696.50C683.33 696.50 683.67 696.50 684.00 696.50C684.33 696.50 684.67 696.50 685.00 696.50C685.33 696.50 685.67 696.50 686.00 696.50C686.33 696.50 686.67 696.50 687.00 696.50C687.33 696.50 687.67 696.50 688.00 696.50C688.33 696.50 688.67 696.50 689.00 696.50C689.33 696.50 689.67 696.50 690.00 696.50C690.33 696.50 690.67 696.50 691.00 696.50C691.33 696.50 691.67 696.50 692.00 696.50C692.33 696.50 692.67 696.50 693.00 696.50C693.33 696.50 693.67 696.50 694.00 696.50C694.33 696.50 694.67 696.50 695.00 696.50C695.33 696.50 695.67 696.50 696.00 696.50C696.33 696.50 696.67 696.50 697.00 696.50C697.33 696.50 697.67 696.50 698.00 696.50C698.33 696.50 698.67 696.50 699.00 696.50C699.33 696.50 699.67 696.50 700.00 696.50C700.33 696.50 700.67 696.50 701.00 696.50C701.33 696.50 701.67 696.50 702.00 696.50C702.33 696.50 702.67 696.50 703.00 696.50C703.33 696.50 703.67 696.50 704.00 696.50C704.33 696.50 704.67 696.50 705.00 696.50C705.33 696.50 705.67 696.50 706.00 696.50C706.33 696.50 706.67 696.50 707.00 696.50C707.33 696.50 707.67 696.50 708.00 696.50C708.33 696.50 708.67 696.50 709.00 696.50C709.33 696.50 709.67 696.50 710.00 696.50C710.33 696.50 710.67 696.50 711.00 696.50C711.33 696.50 711.67 696.50 712.00 696.50C712.33 696.50 712.67 696.50 713.00 696.50C713.33 696.50 713.67 696.50 714.00 696.50C714.33 696.50 714.67 696.50 715.00 696.50C715.33 696.50 715.67 696.50 716.00 696.50C716.33 696.50 716.67 696.50 717.00 696.50C717.33 696.50 717.67 696.50 718.00 696.50C718.33 696.50 718.67 696.50 719.00 696.50C719.33 696.50 719.67 696.50 720.00 696.50C720.33 696.50 720.67 696.50 721.00 696.50C721.33 696.50 721.67 696.50 722.00 696.50C722.33 696.50 722.67 696.50 723.00 696.50C723.33 696.50 723.67 696.50 724.00 696.50C724.33 696.50 724.67 696.50 725.00 696.50C725.33 696.50 725.67 696.50 726.00 696.50C726.33 696.50 726.67 696.50 727.00 696.50C727.33 696.50 727.67 696.50 728.00 696.50C728.33 696.50 728.67 696.50 729.00 696.50C729.33 696.50 729.67 696.50 730.00 696.50C730.33 696.50 730.67 696.50 731.00 696.50C731.33 696.50 731.67 696.50 732.00 696.50C732.33 696.50 732.67 696.50 733.00 696.50C733.33 696.50 733.67 696.50 734.00 696.50C734.33 696.50 734.67 696.50 735.00 696.50C735.33 696.50 735.67 696.50 736.00 696.50C736.33 696.50 736.67 696.50 737.00 696.50C737.33 696.50 737.67 696.50 738.00 696.50C738.33 696.50 738.67 696.50 739.00 696.50C739.33 696.50 739.67 696.50 740.00 696.50C740.33 696.50 740.67 696.50 741.00 696.50C741.33 696.50 741.67 696.50 742.00 696.50C742.33 696.50 742.67 696.50 743.00 696.50C743.33 696.50 743.67 696.50 744.00 696.50C744.33 696.50 744.67 696.50 745.00 696.50C745.33 696.50 745.67 696.50 746.00 696.50C746.33 696.50 746.67 696.50 747.00 696.50C747.33 696.50 747.67 696.50 748.00 696.50C748.33 696.50 748.67 696.50 749.00 696.50C749.33 696.50 749.67 696.50 750.00 696.50C750.33 696.50 750.67 696.50 751.00 696.50C751.33 696.50 751.67 696.50 752.00 696.50C752.33 696.50 752.67 696.50 753.00 696.50C753.33 696.50 753.67 696.50 754.00 696.50C754.33 696.50 754.67 696.50 755.00 696.50C755.33 696.50 755.67 696.50 756.00 696.50C756.33 696.50 756.67 696.50 757.00 696.50C757.33 696.50 757.67 696.50 758.00 696.50C758.33 696.50 758.67 696.50 759.00 696.50C759.33 696.50 759.67 696.50 760.00 696.50C760.33 696.50 760.67 696.50 761.00 696.50C761.33 696.50 761.67 696.50 762.00 696.50C762.33 696.50 762.67 696.50 763.00 696.50C763.33 696.50 763.67 696.50 764.00 696.50C764.33 696.50 764.67 696.50 765.00 696.50C765.33 696.50 765.67 696.50 766.00 696.50C766.33 696.50 766.67 696.50 767.00 696.50C767.33 696.50 767.67 696.50 768.00 696.50C768.33 696.50 768.67 696.50 769.00 696.50C769.33 696.50 769.67 696.50 770.00 696.50C770.33 696.50 770.67 696.50 771.00 696.50C771.33 696.50 771.67 696.50 772.00 696.50C772.33 696.50 772.67 696.50 773.00 696.50C773.33 696.50 773.67 696.50 774.00 696.50C774.33 696.50 774.67 696.50 775.00 696.50C775.33 696.50 775.67 696.50 776.00 696.50C776.33 696.50 776.67 696.50 777.00 696.50C777.33 696.50 777.67 696.50 778.00 696.50C778.33 696.50 778.67 696.50 779.00 696.50C779.33 696.50 779.67 696.50 780.00 696.50C780.33 696.50 780.67 696.50 781.00 696.50C781.33 696.50 781.67 696.50 782.00 696.50C782.33 696.50 782.67 696.50 783.00 696.50C783.33 696.50 783.67 696.50 784.00 696.50C784.33 696.50 784.67 696.50 785.00 696.50C785.33 696.50 785.67 696.50 786.00 696.50C786.33 696.50 786.67 696.50 787.00 696.50C787.33 696.50 787.67 696.50 788.00 696.50C788.33 696.50 788.67 696.50 789.00 696.50C789.33 696.50 789.67 696.50 790.00 696.50C790.33 696.50 790.67 696.50 791.00 696.50C791.33 696.50 791.67 696.50 792.00 696.50C792.33 696.50 792.67 696.50 793.00 696.50C793.33 696.50 793.67 696.50 794.00 696.50C794.33 696.50 794.67 696.50 795.00 696.50C795.33 696.50 795.67 696.50 796.00 696.50C796.33 696.50 796.67 696.50 797.00 696.50C797.33 696.50 797.67 696.50 798.00 696.50C798.33 696.50 798.67 696.50 799.00 696.50C799.33 696.50 799.67 696.50 800.00 696.50C800.33 696.50 800.67 696.50 801.00 696.50C801.33 696.50 801.67 696.50 802.00 696.50C802.33 696.50 802.67 696.50 803.00 696.50C803.33 696.50 803.67 696.50 804.00 696.50C804.33 696.50 804.67 696.50 805.00 696.50C805.33 696.50 805.67 696.50 806.00 696.50C806.33 696.50 806.67 696.50 807.00 696.50C807.33 696.50 807.67 696.50 808.00 696.50C808.33 696.50 808.67 696.50 809.00 696.50C809.33 696.50 809.67 657.50 810.00 657.50C810.33 657.50 810.67 696.50 811.00 696.50C811.33 696.50 811.67 696.50 812.00 696.50C812.33 696.50 812.67 696.50 813.00 696.50C813.33 696.50 813.67 696.50 814.00 696.50C814.33 696.50 814.67 592.50 815.00 592.50C815.33 592.50 815.67 696.50 816.00 696.50C816.33 696.50 816.67 696.50 817.00 696.50C817.33 696.50 817.67 696.50 818.00 696.50C818.33 696.50 818.67 696.50 819.00 696.50C819.33 696.50 819.67 657.50 820.00 657.50C820.33 657.50 820.67 696.50 821.00 696.50C821.33 696.50 821.67 696.50 822.00 696.50C822.33 696.50 822.67 696.50 823.00 696.50C823.33 696.50 823.67 696.50 824.00 696.50C824.33 696.50 824.67 696.50 825.00 696.50C825.33 696.50 825.67 670.50 826.00 670.50C826.33 670.50 826.67 696.50 827.00 696.50C827.33 696.50 827.67 696.50 828.00 696.50C828.33 696.50 828.67 696.50 829.00 696.50C829.33 696.50 829.67 696.50 830.00 696.50C830.33 696.50 830.67 696.50 831.00 696.50C831.33 696.50 831.67 696.50 832.00 696.50C832.33 696.50 832.67 696.50 833.00 696.50C833.33 696.50 833.67 696.50 834.00 696.50C834.33 696.50 834.67 696.50 835.00 696.50C835.33 696.50 835.67 696.50 836.00 696.50C836.33 696.50 836.67 696.50 837.00 696.50C837.33 696.50 837.67 696.50 838.00 696.50C838.33 696.50 838.67 696.50 839.00 696.50C839.33 696.50 839.67 696.50 840.00 696.50C840.33 696.50 840.67 657.50 841.00 657.50C841.33 657.50 841.67 696.50 842.00 696.50C842.33 696.50 842.67 696.50 843.00 696.50C843.33 696.50 843.67 696.50 844.00 696.50C844.33 696.50 844.67 696.50 845.00 696.50C845.33 696.50 845.67 696.50 846.00 696.50C846.33 696.50 846.67 540.50 847.00 540.50C847.33 540.50 847.67 696.50 848.00 696.50C848.33 696.50 848.67 696.50 849.00 696.50C849.33 696.50 849.67 696.50 850.00 696.50C850.33 696.50 850.67 696.50 851.00 696.50C851.33 696.50 851.67 670.50 852.00 670.50C852.33 670.50 852.67 696.50 853.00 696.50C853.33 696.50 853.67 696.50 854.00 696.50C854.33 696.50 854.67 696.50 855.00 696.50C855.33 696.50 855.67 696.50 856.00 696.50C856.33 696.50 856.67 696.50 857.00 696.50C857.33 696.50 857.67 540.50 858.00 540.50C858.33 540.50 858.67 696.50 859.00 696.50C859.33 696.50 859.67 670.50 860.00 670.50C860.33 670.50 860.67 696.50 861.00 696.50C861.33 696.50 861.67 696.50 862.00 696.50C862.33 696.50 862.67 683.50 863.00 683.50C863.33 683.50 863.67 696.50 864.00 696.50C864.33 696.50 864.67 696.50 865.00 696.50C865.33 696.50 865.67 696.50 866.00 696.50C866.33 696.50 866.67 696.50 867.00 696.50C867.33 696.50 867.67 657.50 868.00 657.50C868.33 657.50 868.67 696.50 869.00 696.50C869.33 696.50 869.67 696.50 870.00 696.50C870.33 696.50 870.67 696.50 871.00 696.50C871.33 696.50 871.67 696.50 872.00 696.50C872.33 696.50 872.67 592.50 873.00 592.50C873.33 592.50 873.67 696.50 874.00 696.50C874.33 696.50 874.67 696.50 875.00 696.50C875.33 696.50 875.67 696.50 876.00 696.50C876.33 696.50 876.67 696.50 877.00 696.50C877.33 696.50 877.67 696.50 878.00 696.50C878.33 696.50 878.67 540.50 879.00 540.50C879.33 540.50 879.67 696.50 880.00 696.50C880.33 696.50 880.67 696.50 881.00 696.50C881.33 696.50 881.67 696.50 882.00 696.50C882.33 696.50 882.67 696.50 883.00 696.50C883.33 696.50 883.67 566.50 884.00 566.50C884.33 566.50 884.67 696.50 885.00 696.50C885.33 696.50 885.67 696.50 886.00 696.50C886.33 696.50 886.67 696.50 887.00 696.50C887.33 696.50 887.67 696.50 888.00 696.50C888.33 696.50 888.67 618.50 889.00 618.50C889.33 618.50 889.67 696.50 890.00 696.50C890.33 696.50 890.67 696.50 891.00 696.50C891.33 696.50 891.67 696.50 892.00 696.50C892.33 696.50 892.67 696.50 893.00 696.50C893.33 696.50 893.67 696.50 894.00 696.50C894.33 696.50 894.67 670.50 895.00 670.50C895.33 670.50 895.67 696.50 896.00 696.50C896.33 696.50 896.67 696.50 897.00 696.50C897.33 696.50 897.67 696.50 898.00 696.50C898.33 696.50 898.67 696.50 899.00 696.50C899.33 696.50 899.67 540.50 900.00 540.50C900.33 540.50 900.67 696.50 901.00 696.50C901.33 696.50 901.67 696.50 902.00 696.50C902.33 696.50 902.67 696.50 903.00 696.50C903.33 696.50 903.67 696.50 904.00 696.50C904.33 696.50 904.67 696.50 905.00 696.50C905.33 696.50 905.67 553.50 906.00 553.50C906.33 553.50 906.67 696.50 907.00 696.50C907.33 696.50 907.67 696.50 908.00 696.50C908.33 696.50 908.67 696.50 909.00 696.50C909.33 696.50 909.67 696.50 910.00 696.50C910.33 696.50 910.67 644.50 911.00 644.50C911.33 644.50 911.67 696.50 912.00 696.50C912.33 696.50 912.67 696.50 913.00 696.50C913.33 696.50 913.67 696.50 914.00 696.50C914.33 696.50 914.67 696.50 915.00 696.50C915.33 696.50 915.67 657.50 916.00 657.50C916.33 657.50 916.67 696.50 917.00 696.50C917.33 696.50 917.67 696.50 918.00 696.50C918.33 696.50 918.67 696.50 919.00 696.50C919.33 696.50 919.67 696.50 920.00 696.50C920.33 696.50 920.67 566.50 921.00 566.50C921.33 566.50 921.67 696.50 922.00 696.50C922.33 696.50 922.67 696.50 923.00 696.50C923.33 696.50 923.67 696.50 924.00 696.50C924.33 696.50 924.67 696.50 925.00 696.50C925.33 696.50 925.67 696.50 926.00 696.50C926.33 696.50 926.67 683.50 927.00 683.50C927.33 683.50 927.67 696.50 928.00 696.50C928.33 696.50 928.67 670.50 929.00 670.50C929.33 670.50 929.67 696.50 930.00 696.50C930.33 696.50 930.67 696.50 931.00 696.50C931.33 696.50 931.67 683.50 932.00 683.50C932.33 683.50 932.67 696.50 933.00 696.50C933.33 696.50 933.67 696.50 934.00 696.50C934.33 696.50 934.67 696.50 935.00 696.50C935.33 696.50 935.67 592.50 936.00 592.50C936.33 592.50 936.67 696.50 937.00 696.50C937.33 696.50 937.67 696.50 938.00 696.50C938.33 696.50 938.67 657.50 939.00 657.50C939.33 657.50 939.67 696.50 940.00 696.50C940.33 696.50 940.67 657.50 941.00 657.50C941.33 657.50 941.67 696.50 942.00 696.50C942.33 696.50 942.67 696.50 943.00 696.50C943.33 696.50 943.67 683.50 944.00 683.50C944.33 683.50 944.67 696.50 945.00 696.50C945.33 696.50 945.67 696.50 946.00 696.50C946.33 696.50 946.67 696.50 947.00 696.50C947.33 696.50 947.67 670.50 948.00 670.50C948.33 670.50 948.67 696.50 949.00 696.50C949.33 696.50 949.67 696.50 950.00 696.50C950.33 696.50 950.67 696.50 951.00 696.50C951.33 696.50 951.67 657.50 952.00 657.50C952.33 657.50 952.67 696.50 953.00 696.50C953.33 696.50 953.67 696.50 954.00 696.50C954.33 696.50 954.67 670.50 955.00 670.50C955.33 670.50 955.67 696.50 956.00 696.50C956.33 696.50 956.67 696.50 957.00 696.50C957.33 696.50 957.67 696.50 958.00 696.50C958.33 696.50 958.67 540.50 959.00 540.50C959.33 540.50 959.67 696.50 960.00 696.50C960.33 696.50 960.67 670.50 961.00 670.50C961.33 670.50 961.67 696.50 962.00 696.50C962.33 696.50 962.67 696.50 963.00 696.50C963.33 696.50 963.67 540.50 964.00 540.50C964.33 540.50 964.67 696.50 965.00 696.50C965.33 696.50 965.67 696.50 966.00 696.50C966.33 696.50 966.67 670.50 967.00 670.50C967.33 670.50 967.67 696.50 968.00 696.50C968.33 696.50 968.67 696.50 969.00 696.50C969.33 696.50 969.67 657.50 970.00 657.50C970.33 657.50 970.67 696.50 971.00 696.50C971.33 696.50 971.67 657.50 972.00 657.50C972.33 657.50 972.67 696.50 973.00 696.50C973.33 696.50 973.67 696.50 974.00 696.50C974.33 696.50 974.67 579.50 975.00 579.50C975.33 579.50 975.67 696.50 976.00 696.50C976.33 696.50 976.67 696.50 977.00 696.50C977.33 696.50 977.67 696.50 978.00 696.50C978.33 696.50 978.67 696.50 979.00 696.50C979.33 696.50 979.67 683.50 980.00 683.50C980.33 683.50 980.67 696.50 981.00 696.50C981.33 696.50 981.67 696.50 982.00 696.50C982.33 696.50 982.67 696.50 983.00 696.50C983.33 696.50 983.67 696.50 984.00 696.50C984.33 696.50 984.67 501.50 985.00 501.50C985.33 501.50 985.67 696.50 986.00 696.50C986.33 696.50 986.67 696.50 987.00 696.50C987.33 696.50 987.67 683.50 988.00 683.50C988.33 683.50 988.67 696.50 989.00 696.50C989.33 696.50 989.67 696.50 990.00 696.50C990.33 696.50 990.67 579.50 991.00 579.50C991.33 579.50 991.67 696.50 992.00 696.50C992.33 696.50 992.67 696.50 993.00 696.50C993.33 696.50 993.67 696.50 994.00 696.50C994.33 696.50 994.67 696.50 995.00 696.50C995.33 696.50 995.67 696.50 996.00 696.50C996.33 696.50 996.67 462.50 997.00 462.50C997.33 462.50 997.67 696.50 998.00 696.50C998.33 696.50 998.67 670.50 999.00 670.50C999.33 670.50 999.67 696.50 1000.00 696.50C1000.33 696.50 1000.67 696.50 1001.00 696.50C1001.33 696.50 1001.67 631.50 1002.00 631.50C1002.33 631.50 1002.67 696.50 1003.00 696.50C1003.33 696.50 1003.67 696.50 1004.00 696.50" fill="none" stroke="#5fb3b8" stroke-width="1.8" stroke-linejoin="round"/>
</svg>

<!-- AI analysis -->
<svg class="a" style="left:406px;top:756px" width="18" height="18" viewBox="0 0 24 24" fill="none" stroke="#8b8cf5" stroke-width="2.2" stroke-linecap="round" stroke-linejoin="round"><path d="M12 5a3 3 0 1 0-5.997.125 4 4 0 0 0-2.526 5.77 4 4 0 0 0 .556 6.588A4 4 0 1 0 12 18Z"/><path d="M9 13a4.5 4.5 0 0 0 3-4M6.003 5.125A3 3 0 0 0 6.401 6.5M3.477 10.896a4 4 0 0 1 .585-.396M6 18a4 4 0 0 1-1.967-.516M12 13h4M12 18h6a2 2 0 0 1 2 2v1M12 8h8M16 8V5a2 2 0 0 1 2-2"/></svg>
<div class="a" style="left:432px;top:757px;font-size:15px;color:#f4f4f5">AI Performance Analysis</div>
<div class="a" style="left:432px;top:779px;font-size:12.7px;color:#a1a1a7">Last updated: 4/3/2026</div>
<div class="a" style="left:432px;top:800px;width:122px;height:2px;background:#2a3458"></div>

<div class="a" style="left:408px;top:818px;width:603px;height:190px;border-radius:8px 8px 0 0;background:#202023;overflow:hidden">
 <svg class="a" style="left:20px;top:22px" width="16" height="16" viewBox="0 0 24 24" fill="none" stroke="#f59e0b" stroke-width="2.2" stroke-linejoin="round"><path d="M13 2L4 14h7l-1 8 9-12h-7z"/></svg>
 <div class="a" style="left:44px;top:20px;font-size:14.8px;color:#f4f4f5">Executive Summary</div>
 <div class="a" style="left:20px;top:47px;width:590px;font-size:14.9px;line-height:22.6px;color:#b4b4ba">Viljar Võidula is a high-velocity full-stack engineer specializing in the intersection of<br>financial analytics and complex UI architectures. He has significantly advanced the<br>platform's reporting capabilities, specifically through the implementation of<br>sophisticated data anchoring logic and hierarchical organizational management<br>tools.</div>
 <div class="a" style="left:20px;top:182.5px;font-size:12px;color:#22c55e;letter-spacing:0px;-webkit-text-stroke:0.2px #22c55e">KEY STRENGTHS</div>
 <div class="a" style="left:314px;top:182.5px;font-size:12px;color:#f59e0b;letter-spacing:0px;-webkit-text-stroke:0.2px #f59e0b">AREAS FOR GROWTH</div>
</div>

<!-- right column -->
<div class="card" style="left:1035px;top:388px;width:289px;height:94px;background:#202023;border:1px solid #2a2a2e"></div>
<svg class="a" style="left:1048px;top:402px" width="14" height="14" viewBox="0 0 24 24" fill="none" stroke="#a1a1a7" stroke-width="2" stroke-linecap="round"><circle cx="12" cy="12" r="4"/><path d="M12 2v2M12 20v2M4.9 4.9l1.4 1.4M17.7 17.7l1.4 1.4M2 12h2M20 12h2M6.3 17.7l-1.4 1.4M19.1 4.9l-1.4 1.4"/></svg>
<div class="a" style="left:1070px;top:403px;font-size:11px;color:#8e8e94;letter-spacing:-0.35px">PEAK ACTIVITY HOURS</div>
<div class="a" style="left:1048px;top:428px;font-size:18px;font-weight:bold;color:#f08a3c;letter-spacing:0.55px">8am-10am, 4pm</div>
<div class="a" style="left:1048px;top:456px;font-size:10.5px;color:#c4c4c8">UTC</div>

<div class="card" style="left:1035px;top:502px;width:289px;height:140px;background:#202023;border:1px solid #2a2a2e"></div>
<svg class="a" style="left:1052px;top:521px" width="16" height="16" viewBox="0 0 24 24" fill="none" stroke="#a1a1a7" stroke-width="2" stroke-linecap="round" stroke-linejoin="round"><path d="M14.7 6.3a1 1 0 0 0 0 1.4l1.6 1.6a1 1 0 0 0 1.4 0l3.8-3.8a6 6 0 0 1-7.9 7.9l-6.9 6.9a2.1 2.1 0 0 1-3-3l6.9-6.9a6 6 0 0 1 7.9-7.9z"/></svg>
<div class="a" style="left:1076px;top:521.5px;font-size:12.8px;color:#8e8e94;letter-spacing:-0.4px">MAKER SCORE</div>
<div class="a" style="left:1270px;top:520px;font-size:14px;font-weight:bold;color:#c4c4c8">100%</div>
<div class="a" style="left:1052px;top:551px;width:255px;height:8px;border-radius:4px;background:#f08a30"></div>
<div class="a sb" style="left:1052px;top:572.5px;font-size:14.8px;color:#c4c4c8;letter-spacing:0.2px">Deep Work Champion</div>
<div class="a" style="left:1052px;top:593px;width:225px;font-size:13px;line-height:15.5px;color:#8a8a90">Prefers long uninterrupted coding sessions</div>
<svg class="a" style="left:1291px;top:590px" width="16" height="16" viewBox="0 0 24 24" fill="none" stroke="#a1a1a7" stroke-width="2" stroke-linejoin="round"><path d="M13 2L4 14h7l-1 8 9-12h-7z"/></svg>

<div class="card" style="left:1035px;top:662px;width:138px;height:94px;background:#202023;border:1px solid #2a2a2e"></div>
<svg class="a" style="left:1048px;top:676px" width="14" height="14" viewBox="0 0 24 24" fill="none" stroke="#a1a1a7" stroke-width="2" stroke-linejoin="round"><path d="M12 3a6 6 0 0 0 9 9 9 9 0 1 1-9-9z"/></svg>
<div class="a" style="left:1070px;top:677px;font-size:10.7px;color:#8e8e94;letter-spacing:-0.35px">OFF-HOURS</div>
<div class="a" style="left:1047px;top:701px;font-size:18.5px;font-weight:bold;color:#e4e4e7">26%</div>
<div class="a" style="left:1048px;top:729px;font-size:10.5px;color:#a1a1a7">Moderate</div>

<div class="card" style="left:1185px;top:662px;width:139px;height:94px;background:#202023;border:1px solid #2a2a2e"></div>
<svg class="a" style="left:1198px;top:676px" width="14" height="14" viewBox="0 0 24 24" fill="none" stroke="#a1a1a7" stroke-width="2" stroke-linecap="round" stroke-linejoin="round"><path d="M10 2v2M14 2v2M6 2v2M16 8a1 1 0 0 1 1 1v8a4 4 0 0 1-4 4H7a4 4 0 0 1-4-4V9a1 1 0 0 1 1-1h14a4 4 0 1 1 0 8h-1"/></svg>
<div class="a" style="left:1220px;top:677px;font-size:10.7px;color:#8e8e94;letter-spacing:-0.35px">WEEKEND</div>
<div class="a" style="left:1198px;top:701px;font-size:18.5px;font-weight:bold;color:#f59e0b">21%</div>
<div class="a" style="left:1198px;top:729px;font-size:10.5px;color:#a1a1a7">High</div>

<div class="card" style="left:1035px;top:776px;width:289px;height:81px;background:#221a16;border:1px solid #7a4218"></div>
<div class="a" style="left:1048px;top:790px;font-size:12.5px;color:#c4c4c8">Work-Life Balance</div>
<div class="a" style="left:1212px;top:790px;width:99px;text-align:right;font-size:12.5px;font-weight:bold;color:#f59e0b;letter-spacing:0.2px">Needs Attention</div>
<div class="a" style="left:1048px;top:813px;width:263px;height:8px;border-radius:4px;background:#2c2a2a"></div>
<div class="a" style="left:1048px;top:813px;width:140px;height:8px;border-radius:4px;background:#f59e0b"></div>
<div class="a" style="left:1048px;top:833px;width:6px;height:6px;border-radius:50%;background:#8a5530"></div>
<div class="a" style="left:1058px;top:831px;font-size:10.7px;color:#e08a4a">Burnout indicators detected - consider checking in</div>

<div class="card" style="left:1035px;top:881px;width:289px;height:98px;background:#1f1816;border:1px solid #3d2418"></div>
<div class="a" style="left:1052px;top:898px;width:36px;height:36px;border-radius:8px;background:#161517"></div>
<svg class="a" style="left:1061px;top:907px" width="18" height="18" viewBox="0 0 24 24" fill="none" stroke="#f08a30" stroke-width="2.2" stroke-linecap="round" stroke-linejoin="round"><path d="M8.5 14.5A2.5 2.5 0 0 0 11 12c0-1.4-.5-2-1-3-1.1-2.1-.2-4 2-6 .5 2.5 2 4.9 4 6.5 2 1.6 3 3.5 3 5.5a7 7 0 1 1-14 0c0-1.2.4-2.3 1-3.3.5 1.5 1.5 2.8 2.5 2.8z"/></svg>
<div class="a sb" style="left:1104px;top:900px;font-size:15px;color:#f4f4f5;letter-spacing:0.25px">Burnout Risk</div>
<div class="a" style="left:1229px;top:898px;width:78px;height:21px;border-radius:11px;border:1px solid #4a2a1a"></div>
<div class="a" style="left:1229px;top:903px;width:78px;text-align:center;font-size:10px;font-weight:bold;color:#f4f4f5;letter-spacing:0.6px">HIGH RISK</div>
<div class="a" style="left:1104px;top:923px;width:200px;font-size:13px;line-height:20px;color:#a1a1a7">High activity during off-hours or weekends detected.</div>

<div class="a" style="left:1030px;top:1000px;width:300px;height:8px;overflow:hidden">
 <div class="a" style="left:5px;top:6px;width:10px;height:10px;border-radius:50%;border:2px solid #8b8cf5"></div>
 <div class="a sb" style="left:29px;top:3px;font-size:14px;color:#f4f4f5">PR &amp; Review Flow</div>
</div>
</body></html>
